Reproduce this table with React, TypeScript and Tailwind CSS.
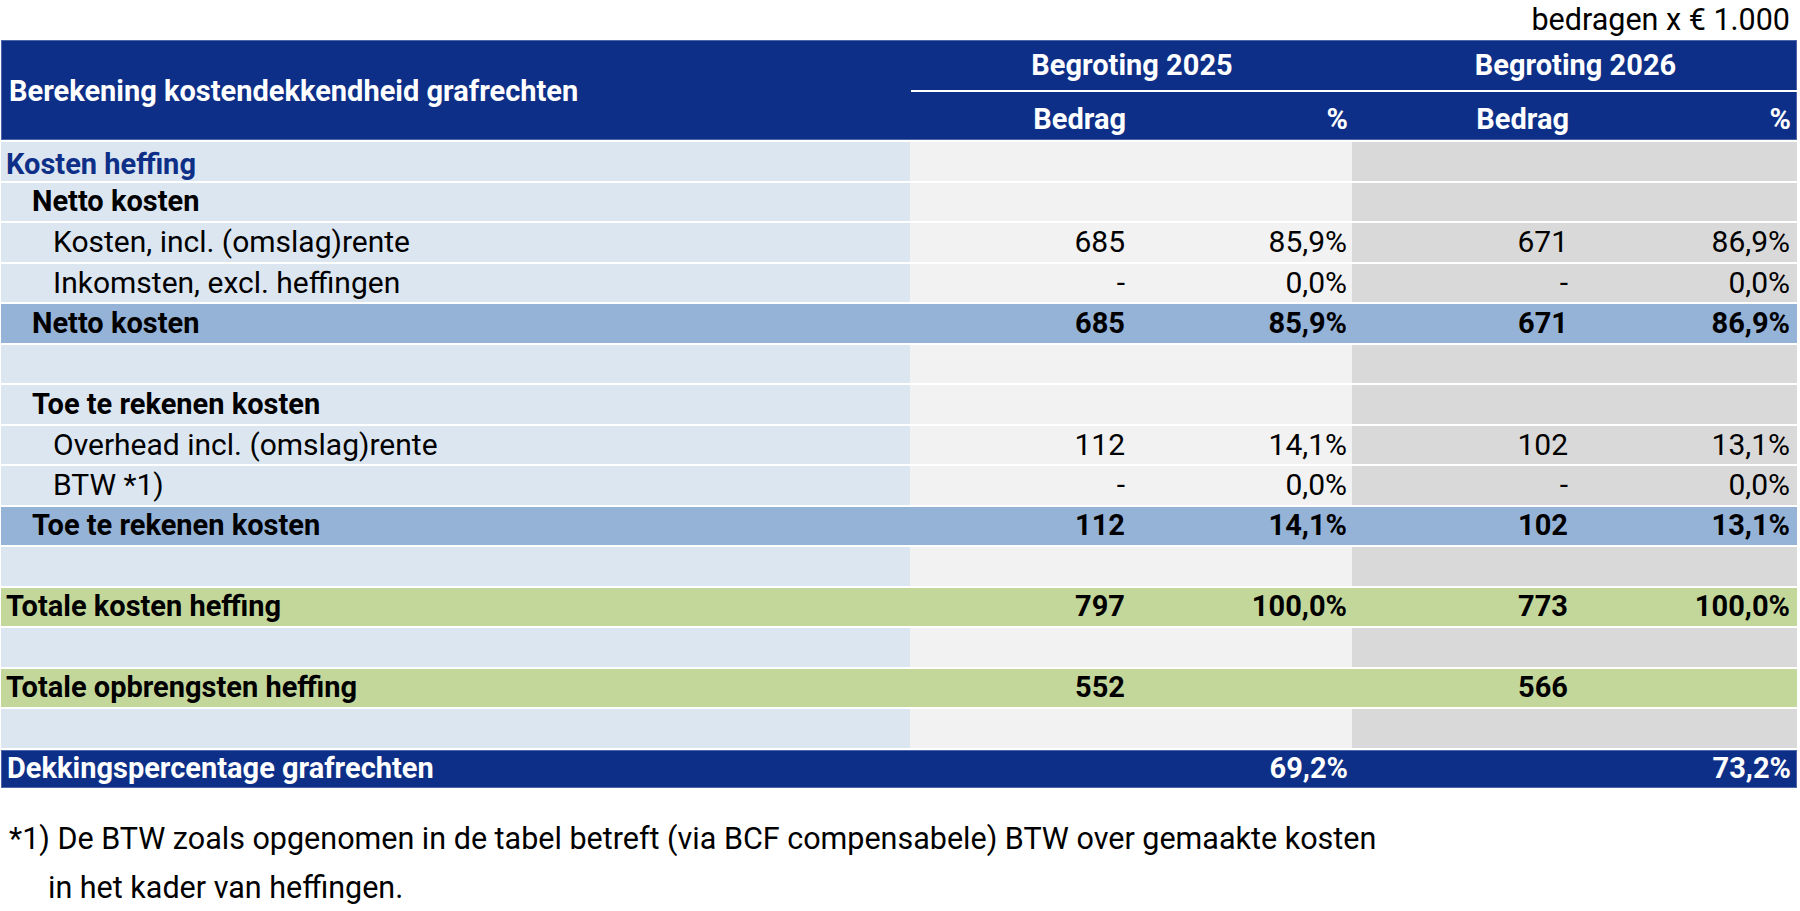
import React from "react";

type Row = {
  label?: string;
  indent?: 0 | 1 | 2;
  kind: "plain" | "section" | "sub" | "total" | "final";
  v?: [string, string, string, string];
};

const ROWS: Row[] = [
  { label: "Kosten heffing", kind: "section" },
  { label: "Netto kosten", indent: 1, kind: "plain" },
  { label: "Kosten, incl. (omslag)rente", indent: 2, kind: "plain", v: ["685", "85,9%", "671", "86,9%"] },
  { label: "Inkomsten, excl. heffingen", indent: 2, kind: "plain", v: ["-", "0,0%", "-", "0,0%"] },
  { label: "Netto kosten", indent: 1, kind: "sub", v: ["685", "85,9%", "671", "86,9%"] },
  { kind: "plain" },
  { label: "Toe te rekenen kosten", indent: 1, kind: "plain" },
  { label: "Overhead incl. (omslag)rente", indent: 2, kind: "plain", v: ["112", "14,1%", "102", "13,1%"] },
  { label: "BTW *1)", indent: 2, kind: "plain", v: ["-", "0,0%", "-", "0,0%"] },
  { label: "Toe te rekenen kosten", indent: 1, kind: "sub", v: ["112", "14,1%", "102", "13,1%"] },
  { kind: "plain" },
  { label: "Totale kosten heffing", kind: "total", v: ["797", "100,0%", "773", "100,0%"] },
  { kind: "plain" },
  { label: "Totale opbrengsten heffing", kind: "total", v: ["552", "", "566", ""] },
  { kind: "plain" },
  { label: "Dekkingspercentage grafrechten", kind: "final", v: ["", "69,2%", "", "73,2%"] },
];

const GRID = "grid grid-cols-[909px_220px_222px_222px_223px]";
const PAD = ["pr-[5px]", "pr-[5px]", "pr-[6px]", "pr-[7px]"];
const INDENT = ["pl-[5px]", "pl-[31px]", "pl-[52px]"];

function TableRow({ row }: { row: Row }) {
  const bold = row.kind !== "plain" || row.indent === 1;
  const rowBg =
    row.kind === "sub"
      ? "bg-[#95b3d7]"
      : row.kind === "total"
        ? "bg-[#c4d79b]"
        : row.kind === "final"
          ? "bg-[#0e2f87] text-white border border-[#4a66a8]"
          : "";
  const cellBg = (i: number) => {
    if (row.kind !== "plain" && row.kind !== "section") return "";
    return i < 2 ? "bg-[#f2f2f2]" : "bg-[#d9d9d9]";
  };
  return (
    <div className={`${GRID} h-[38.5px] ${rowBg} ${bold ? "text-[29px] font-bold" : ""}`}>
      <div
        className={`flex items-center ${INDENT[row.indent ?? 0]} ${
          rowBg ? "" : "bg-[#dce6f1]"
        } ${row.kind === "section" ? "pt-[6px] text-[#0e2f87]" : ""}`}
      >
        {row.label}
      </div>
      {[0, 1, 2, 3].map((i) => (
        <div key={i} className={`flex items-center justify-end ${PAD[i]} ${cellBg(i)}`}>
          {row.v?.[i]}
        </div>
      ))}
    </div>
  );
}

export default function App() {
  return (
    <div className="h-[911px] w-[1800px] bg-white font-['Roboto','Liberation_Sans',sans-serif] text-[30px] leading-none text-black">
      <div className="flex h-[40px] items-center justify-end pr-[10px] text-[30.5px]">bedragen x € 1.000</div>

      <div className="ml-px flex w-[1796px] flex-col gap-[2px]">
        <div
          className={`${GRID} h-[100px] grid-rows-[51px_49px] border border-[#4a66a8] bg-[#0e2f87] text-[29px] font-bold text-white`}
        >
          <div className="row-span-2 flex items-center pl-[7px]">Berekening kostendekkendheid grafrechten</div>
          <div className="col-span-2 flex items-center justify-center border-b-2 border-white">Begroting 2025</div>
          <div className="col-span-2 flex items-center justify-center border-b-2 border-white">Begroting 2026</div>
          <div className={`flex items-center justify-end pt-[6px] ${PAD[0]}`}>Bedrag</div>
          <div className={`flex items-center justify-end pt-[6px] ${PAD[1]}`}>%</div>
          <div className={`flex items-center justify-end pt-[6px] ${PAD[2]}`}>Bedrag</div>
          <div className={`flex items-center justify-end pt-[6px] ${PAD[3]}`}>%</div>
        </div>

        {ROWS.map((row, i) => (
          <TableRow key={i} row={row} />
        ))}
      </div>

      <div className="mt-[26px] pl-[9px] text-[30.5px] leading-[49px]">
        <p>*1) De BTW zoals opgenomen in de tabel betreft (via BCF compensabele) BTW over gemaakte kosten</p>
        <p className="pl-[39px]">in het kader van heffingen.</p>
      </div>
    </div>
  );
}
